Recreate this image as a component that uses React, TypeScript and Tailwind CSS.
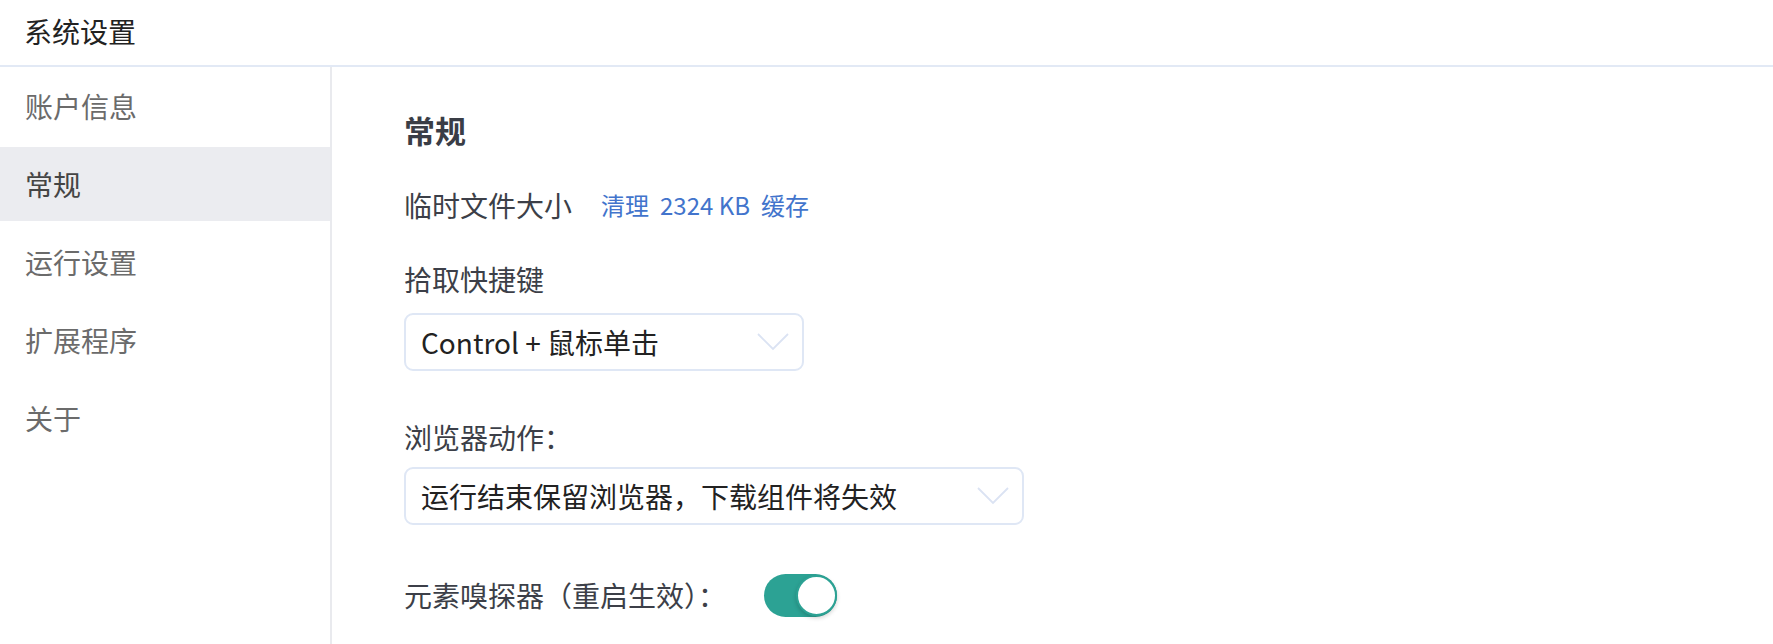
import { useState } from "react";

const NAV_ITEMS = ["账户信息", "常规", "运行设置", "扩展程序", "关于"];

function Chevron() {
  return (
    <svg width="32" height="18" viewBox="0 0 32 18" fill="none">
      <path d="M1 1 L16 16 L31 1" stroke="#dbe3f3" strokeWidth="1.8" />
    </svg>
  );
}

function Select({ value, width }: { value: string; width: string }) {
  return (
    <div
      className={`${width} h-[58px] flex items-center justify-between pl-[15px] pr-[13px] border-2 border-[#dfe7f5] rounded-[9px] bg-white`}
    >
      <span className="text-[28px] text-[#222222] leading-none">{value}</span>
      <Chevron />
    </div>
  );
}

export default function App() {
  const [active, setActive] = useState("常规");
  const [sniffer, setSniffer] = useState(true);

  return (
    <div
      className="w-[1773px] h-[644px] bg-white flex flex-col overflow-hidden"
      style={{ fontFamily: '"Noto Sans CJK SC", "Noto Sans", sans-serif' }}
    >
      {/* Header */}
      <div className="h-[67px] shrink-0 flex items-center pl-[24px] border-b-2 border-[#e2e9f5]">
        <span className="text-[28px] text-[#222222] leading-none -mt-[4px]">系统设置</span>
      </div>

      <div className="flex flex-1 min-h-0">
        {/* Sidebar */}
        <div className="w-[332px] shrink-0 border-r-2 border-[#e9eaee] pt-[2px] flex flex-col gap-[4px]">
          {NAV_ITEMS.map((item) => (
            <div
              key={item}
              onClick={() => setActive(item)}
              className={`h-[74px] flex items-center pl-[25px] cursor-pointer text-[28px] leading-none ${
                active === item ? "bg-[#ebecf0] text-[#454545]" : "text-[#6b6b6b]"
              }`}
            >
              {item}
            </div>
          ))}
        </div>

        {/* Content */}
        <div className="flex-1 pl-[72px] pt-[43px] text-[#3c3f48]">
          <h2 className="h-[40px] flex items-center text-[31px] font-bold text-[#3a3d46]">常规</h2>

          <div className="mt-[35px] h-[40px] flex items-center gap-[29px]">
            <span className="text-[28px]">临时文件大小</span>
            <span className="flex items-center gap-[11px] text-[24px] text-[#4274cc] cursor-pointer">
              <span>清理</span>
              <span>2324 KB</span>
              <span>缓存</span>
            </span>
          </div>

          <div className="mt-[34px] h-[40px] flex items-center text-[28px]">拾取快捷键</div>
          <div className="mt-[14px]">
            <Select value="Control + 鼠标单击" width="w-[400px]" />
          </div>

          <div className="mt-[46px] h-[40px] flex items-center text-[28px]">浏览器动作：</div>
          <div className="mt-[10px]">
            <Select value="运行结束保留浏览器，下载组件将失效" width="w-[620px]" />
          </div>

          <div className="mt-[48px] h-[44px] flex items-center">
            <span className="text-[28px] w-[360px]">元素嗅探器（重启生效）：</span>
            <button
              onClick={() => setSniffer(!sniffer)}
              className={`relative w-[73px] h-[43px] rounded-full ${sniffer ? "bg-[#2ca294]" : "bg-[#d5d8de]"}`}
            >
              <span
                className={`absolute top-[1px] w-[41px] h-[41px] rounded-full bg-white border-2 border-[#2ca294] shadow-[0_2px_4px_rgba(0,0,0,0.18)] ${
                  sniffer ? "right-0" : "left-0"
                }`}
              />
            </button>
          </div>
        </div>
      </div>
    </div>
  );
}
